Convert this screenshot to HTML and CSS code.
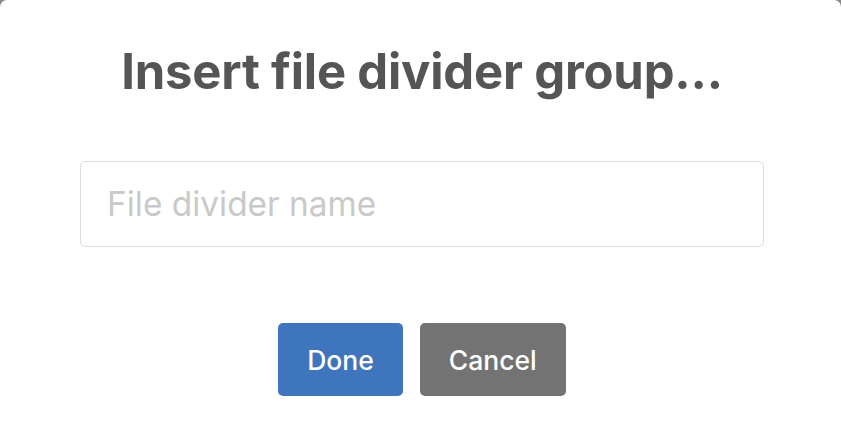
FILE: index.html
```html
<!DOCTYPE html>
<html lang="en">
<head>
<meta charset="utf-8">
<title>Insert file divider group</title>
<link rel="stylesheet" href="styles.css">
</head>
<body>
<div class="modal">
  <h1 class="title">Insert file divider group...</h1>
  <div class="field">
    <input class="input" type="text" placeholder="File divider name">
  </div>
  <div class="actions">
    <button class="btn btn-done" type="button">Done</button>
    <button class="btn btn-cancel" type="button">Cancel</button>
  </div>
</div>
</body>
</html>
```
FILE: styles.css
```css
html, body {
  margin: 0;
  padding: 0;
  height: 100%;
}
body {
  background: #8a8a8a;
  font-family: Inter, "Noto Sans", sans-serif;
  overflow: hidden;
}
.modal {
  background: #ffffff;
  border-radius: 7px 7px 0 0;
  height: 100%;
  box-sizing: border-box;
  padding: 40px 77px 0 80px;
  display: flex;
  flex-direction: column;
}
.title {
  margin: 0;
  text-align: center;
  font-size: 49px;
  font-weight: 700;
  color: #555555;
  line-height: 64px;
  letter-spacing: -0.2px;
}
.field {
  margin-top: 57px;
  display: flex;
}
.input {
  flex: 1;
  height: 86px;
  box-sizing: border-box;
  border: 1px solid #dcdcdc;
  border-radius: 5px;
  padding: 0 26px;
  font-family: Inter, "Noto Sans", sans-serif;
  font-size: 33.4px;
  color: #333;
  outline: none;
  background: #fff;
}
.input::placeholder {
  color: #c9c9c9;
}
.actions {
  margin-top: 76px;
  display: flex;
  justify-content: center;
  gap: 17px;
  padding-left: 0;
}
.btn {
  height: 73px;
  border: none;
  border-radius: 5px;
  font-family: Inter, "Noto Sans", sans-serif;
  font-size: 26.5px;
  font-weight: 500;
  color: #ffffff;
  padding: 0 29px;
}
.btn-done {
  background: #3f75bd;
}
.btn-cancel {
  background: #737373;
}
```
